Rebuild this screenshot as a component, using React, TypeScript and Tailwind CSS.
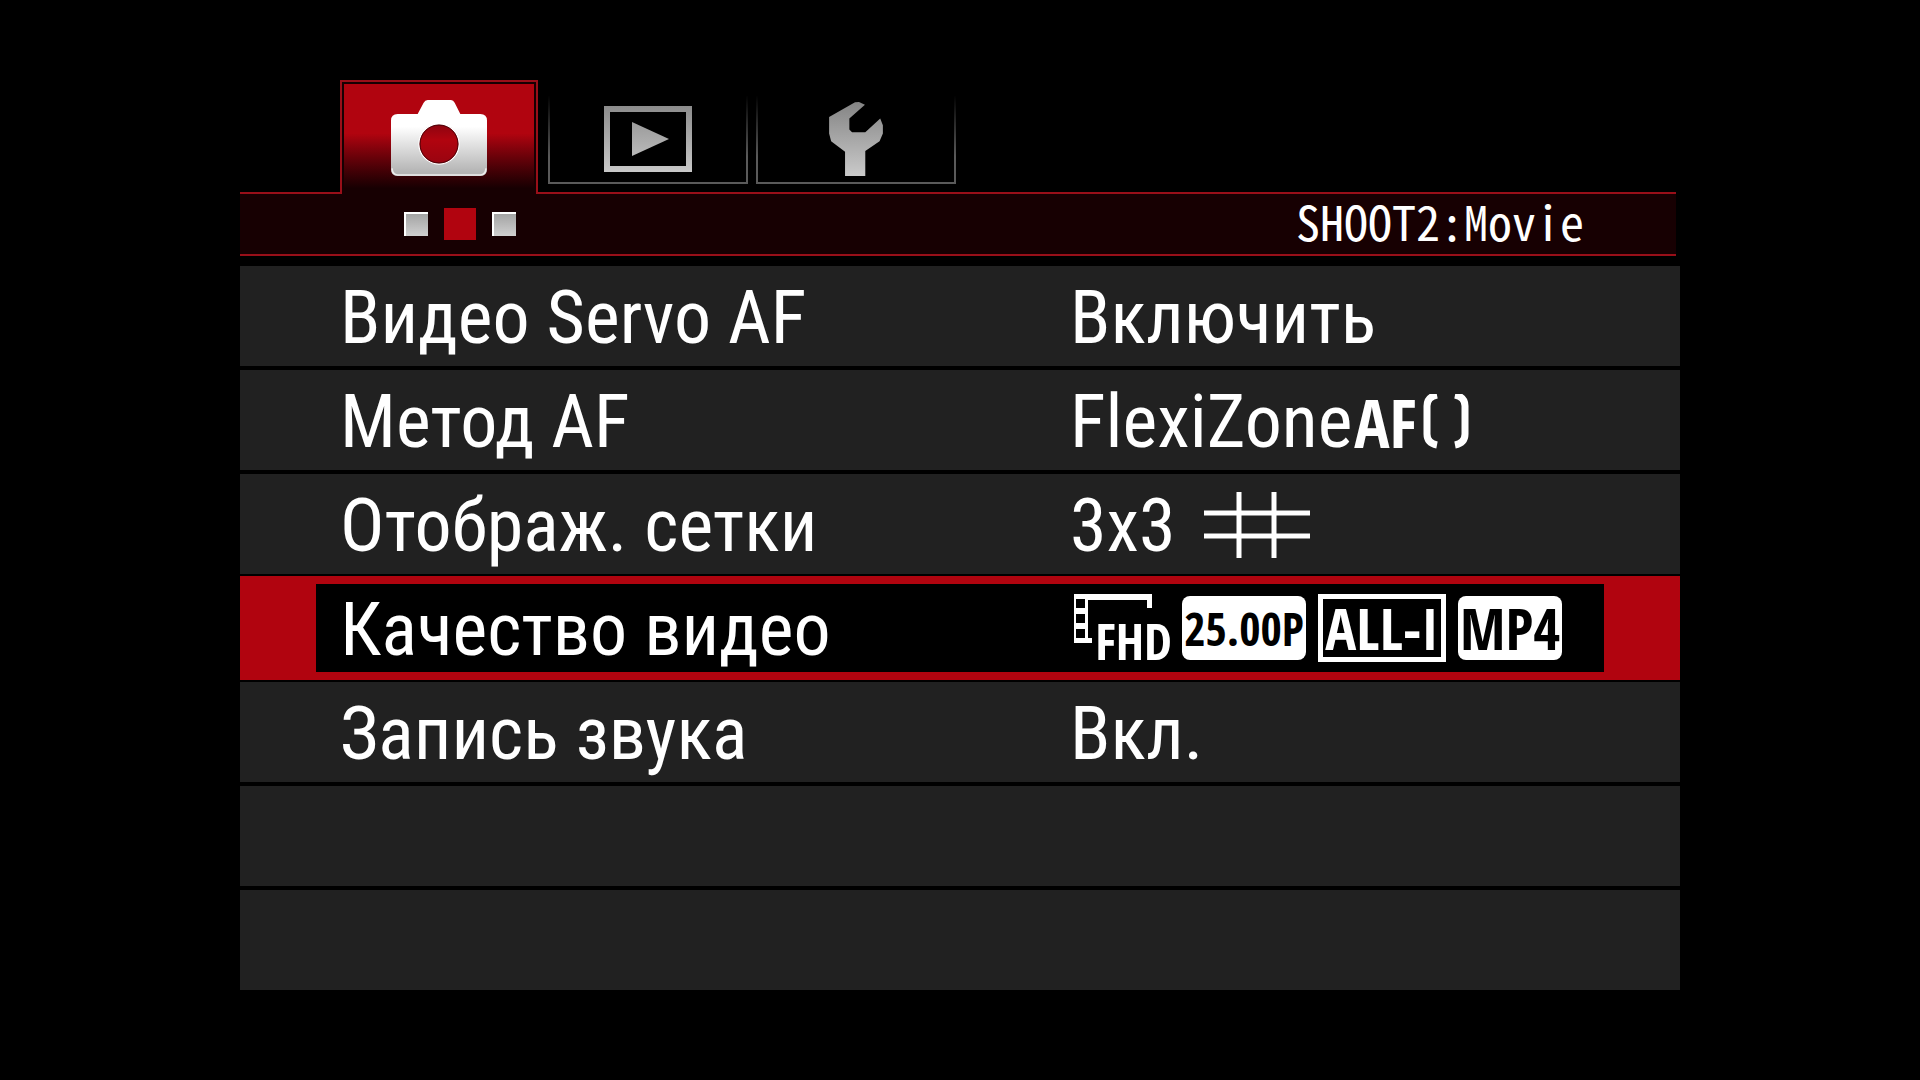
import type { ReactNode } from 'react';
import clsx from 'clsx';

type MenuRow = {
    label: string;
    value: ReactNode;
    selected?: boolean;
};

function CameraIcon() {
    return (
        <svg viewBox="0 0 288 228" className="h-[76px] w-24" aria-hidden="true">
            <defs>
                <linearGradient id="camera-body" x1="0" y1="0" x2="0" y2="1">
                    <stop offset="0.35" stopColor="#ffffff" />
                    <stop offset="0.95" stopColor="#b4b4b4" />
                </linearGradient>
                <linearGradient id="camera-lens" x1="0" y1="0" x2="0" y2="1">
                    <stop offset="0" stopColor="#8c0410" />
                    <stop offset="0.4" stopColor="#b1040f" />
                    <stop offset="1" stopColor="#980410" />
                </linearGradient>
            </defs>
            <path
                d="M20 42H80L98 8Q102 0 110 0H180Q187 0 191 8L208 42H268Q288 42 288 62V208Q288 228 268 228H20Q0 228 0 208V62Q0 42 20 42Z"
                fill="url(#camera-body)"
            />
            <path d="M3 205Q4 224 20 225H268Q284 224 285 205" fill="none" stroke="#ececec" strokeWidth="5" />
            <circle cx="144" cy="132" r="60" fill="url(#camera-lens)" stroke="#ffffff" strokeWidth="4" />
            <circle cx="144" cy="132" r="57" fill="none" stroke="#4a0208" strokeWidth="3" />
        </svg>
    );
}

function PlaybackIcon() {
    return (
        <svg viewBox="0 0 88 66" className="mt-2.5 h-[66px] w-[88px]" aria-hidden="true">
            <defs>
                <linearGradient id="playback" gradientUnits="userSpaceOnUse" x1="0" y1="0" x2="0" y2="66">
                    <stop offset="0" stopColor="#8c8c8c" />
                    <stop offset="1" stopColor="#c8c8c8" />
                </linearGradient>
            </defs>
            <path d="M0 0H88V66H0ZM6 6V60H82V6Z" fillRule="evenodd" fill="url(#playback)" />
            <path d="M28 16L65 33L28 50Z" fill="url(#playback)" />
        </svg>
    );
}

function WrenchIcon() {
    return (
        <svg viewBox="0 0 162 223" className="mt-1.5 h-[74px] w-[54px]" aria-hidden="true">
            <defs>
                <linearGradient id="wrench" x1="0" y1="0" x2="0" y2="1">
                    <stop offset="0" stopColor="#848484" />
                    <stop offset="1" stopColor="#cacaca" />
                </linearGradient>
            </defs>
            <path
                d="M78 1L90 0L108 8L61 50V83L69 91H109L154 50L162 70V95L152 118L109 148V223H48V150L6 118L0 95V45Z"
                fill="url(#wrench)"
            />
        </svg>
    );
}

function GridIcon() {
    return (
        <svg viewBox="0 0 106 68" className="ml-7 h-[68px] w-[106px]" aria-hidden="true">
            <path d="M0 21H106M0 44H106M35 0V66M70 0V66" fill="none" stroke="#ffffff" strokeWidth="5" />
        </svg>
    );
}

function AfFrameIcon() {
    return (
        <svg viewBox="0 0 46 56" className="ml-1.5 h-14 w-[46px]" aria-hidden="true">
            <path
                d="M14 1Q4 3 4 12V40Q4 49 14 51M32 1Q42 3 42 12V40Q42 49 32 51"
                fill="none"
                stroke="#ffffff"
                strokeWidth="7"
            />
        </svg>
    );
}

// Film strip frame with the resolution label laid over its lower right corner
function FullHdBadge() {
    return (
        <span className="relative ml-1 block h-[68px] w-24">
            <svg viewBox="0 0 96 68" className="h-[68px] w-24" aria-hidden="true">
                <path d="M0 0H78V14H73V6H14V44H18V49H0Z" fill="#ffffff" />
                <path d="M2 5H11V14H2ZM2 20H11V29H2ZM2 35H11V44H2Z" fill="#000000" />
            </svg>
            <span className="absolute -right-0.5 -bottom-1 font-['Open_Sans_Condensed','Roboto_Condensed',sans-serif] text-[50px] leading-[50px] font-bold">
                FHD
            </span>
        </span>
    );
}

function Badge({ children, outlined, small }: { children: ReactNode; outlined?: boolean; small?: boolean }) {
    return (
        <span
            className={clsx(
                "flex items-center justify-center font-['Open_Sans_Condensed','Roboto_Condensed',sans-serif] leading-none font-bold",
                outlined ? 'h-[68px] w-32 border-[5px] border-white text-white' : 'h-16 rounded-lg bg-white text-black',
                small ? 'w-[124px] text-[46px]' : 'text-[58px]',
                !outlined && !small && 'w-[104px]',
            )}
        >
            {children}
        </span>
    );
}

const rows: MenuRow[] = [
    { label: 'Видео Servo AF', value: 'Включить' },
    {
        label: 'Метод AF',
        value: (
            <>
                FlexiZone
                <span className="ml-0.5 font-['Open_Sans_Condensed','Roboto_Condensed',sans-serif] text-[66px] font-bold">AF</span>
                <AfFrameIcon />
            </>
        ),
    },
    {
        label: 'Отображ. сетки',
        value: (
            <>
                3x3
                <GridIcon />
            </>
        ),
    },
    {
        label: 'Качество видео',
        selected: true,
        value: (
            <span className="flex items-center gap-3">
                <FullHdBadge />
                <Badge small>25.00P</Badge>
                <Badge outlined>ALL-I</Badge>
                <Badge>MP4</Badge>
            </span>
        ),
    },
    { label: 'Запись звука', value: 'Вкл.' },
    { label: '', value: '' },
    { label: '', value: '' },
];

function Row({ label, value, selected }: MenuRow) {
    return (
        <li>
            <button
                type="button"
                disabled={!label}
                className={clsx(
                    'flex w-full px-[76px] text-left text-[74px] leading-none text-white',
                    selected ? '-my-0.5 h-[104px] bg-[#b1040f] py-2' : 'h-[100px] bg-[#212121]',
                )}
            >
                <span className={clsx('flex h-full flex-1 items-center pl-6 whitespace-nowrap', selected && 'bg-black')}>
                    <span className="w-[730px] shrink-0 pt-1">{label}</span>
                    <span className={clsx('flex items-center', !selected && 'pt-1')}>{value}</span>
                </span>
            </button>
        </li>
    );
}

const idleTab =
    'mt-4 flex h-[88px] w-[200px] items-start justify-center border-2 border-t-0 [border-image:linear-gradient(to_bottom,#000000,#5a5a5a_70%)_1]';

export default function App() {
    return (
        <main className="min-h-screen bg-black pt-20 font-['Roboto_Condensed','Noto_Sans',sans-serif] text-white">
            <div className="mx-auto w-3/4">
                <nav className="flex items-start gap-2 pl-[100px]">
                    <button
                        type="button"
                        aria-label="Shooting"
                        className="z-10 mr-0.5 -mb-0.5 h-[114px] w-[198px] border-2 border-b-0 border-[#990f19] bg-[#170002] px-0.5 pt-0.5"
                    >
                        <span className="flex h-full justify-center bg-linear-to-b from-[#b1040f] from-45% to-[#170002] to-95% pt-4">
                            <CameraIcon />
                        </span>
                    </button>
                    <button type="button" aria-label="Playback" className={idleTab}>
                        <PlaybackIcon />
                    </button>
                    <button type="button" aria-label="Set up" className={idleTab}>
                        <WrenchIcon />
                    </button>
                </nav>

                <header className="mr-1 flex h-16 items-center justify-between border-y-2 border-[#990f19] bg-[#170002] pr-[92px] pl-[164px]">
                    <div className="flex items-center gap-4">
                        <span className="size-6 border-t-2 border-l-2 border-white bg-linear-to-b from-[#a4a4a4] to-[#d0d0d0]" />
                        <span className="size-8 bg-[#b1040f]" />
                        <span className="size-6 border-t-2 border-l-2 border-white bg-linear-to-b from-[#a4a4a4] to-[#d0d0d0]" />
                    </div>
                    <h1 className="pb-2 font-['Noto_Sans_CJK_JP',monospace] text-[48px] leading-none [font-feature-settings:'hwid']">
                        SHOOT2:Movie
                    </h1>
                </header>

                <ul className="mt-2.5 flex flex-col gap-1">
                    {rows.map((row, index) => (
                        <Row key={index} {...row} />
                    ))}
                </ul>
            </div>
        </main>
    );
}
